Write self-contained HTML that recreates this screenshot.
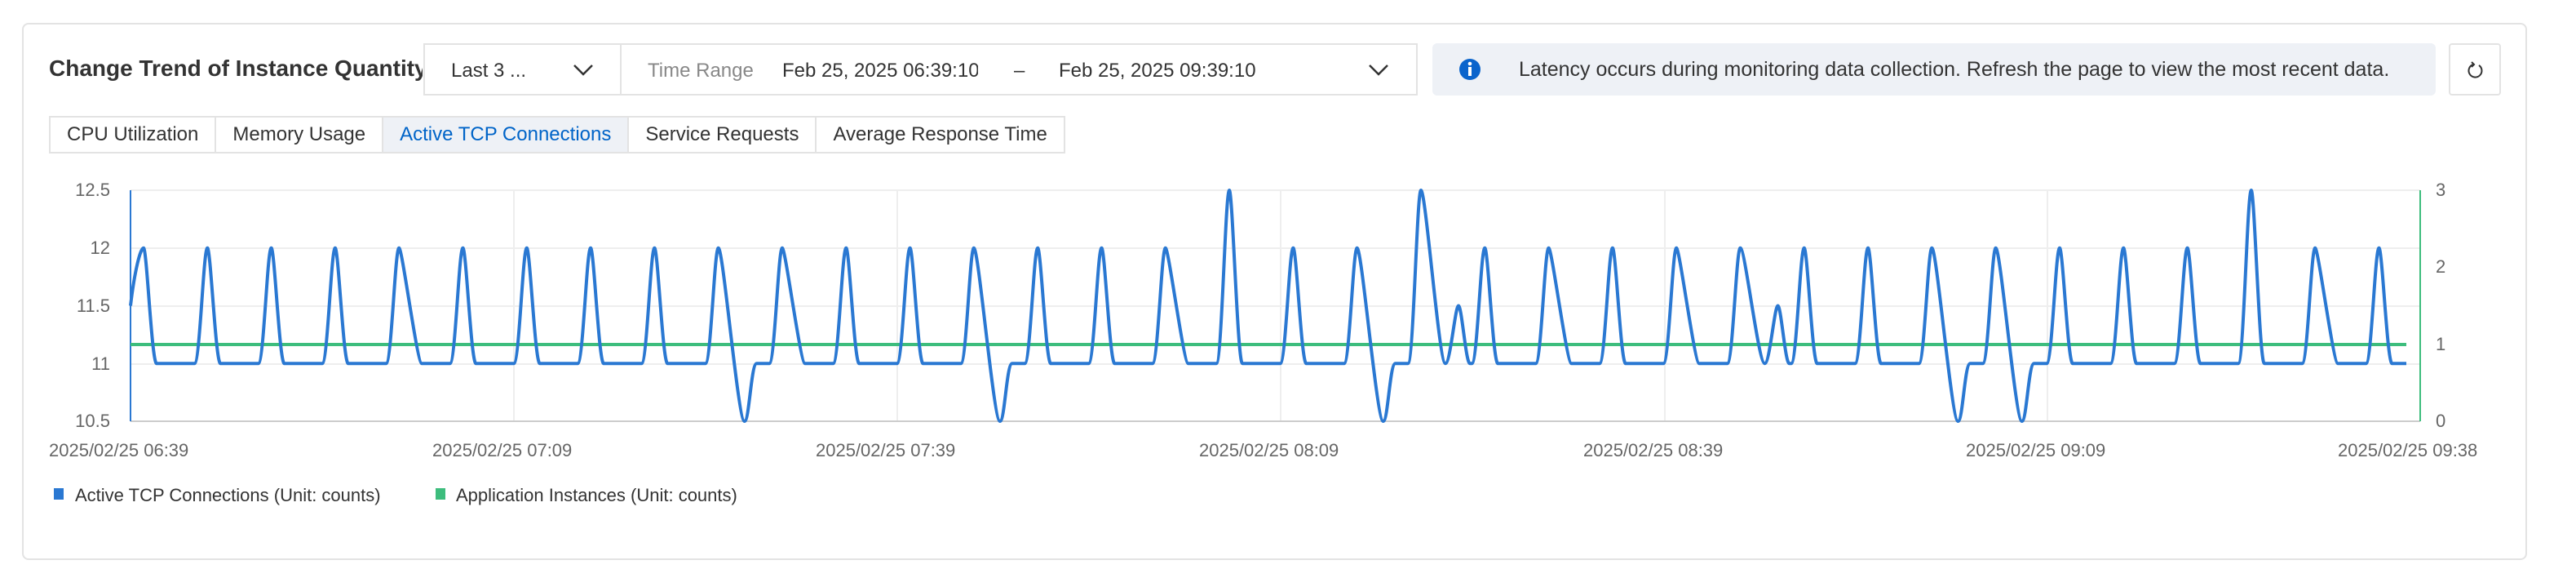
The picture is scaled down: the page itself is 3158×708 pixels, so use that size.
<!DOCTYPE html>
<html><head><meta charset="utf-8"><style>
*{box-sizing:border-box;margin:0;padding:0}
body{width:3158px;height:708px;background:#fff;font-family:"Liberation Sans",sans-serif;position:relative;overflow:hidden;color:#333}
.abs{position:absolute}
.card{left:27px;top:28px;width:3071px;height:658px;border:2px solid #e3e3e3;border-radius:8px}
.title{left:60px;top:68px;font-size:28px;font-weight:bold;color:#333;width:458px;white-space:nowrap;overflow:hidden}
.sel{left:519px;top:53px;width:1219px;height:64px;border:2px solid #e3e3e3;font-size:24px}
.sel span{position:absolute;top:18px;white-space:nowrap}
.info{left:1756px;top:53px;width:1230px;height:64px;background:#eef1f6;border-radius:6px;font-size:25px}
.ref{left:3002px;top:53px;width:64px;height:64px;border:2px solid #e3e3e3;border-radius:4px}
.tabs{left:60px;top:142px;height:46px;display:flex;border:2px solid #e3e3e3;font-size:24px}
.tabs div{height:42px;line-height:42px;padding:0 20px;border-right:2px solid #e3e3e3;color:#333;white-space:nowrap}
.tabs div:last-child{border-right:none}
.tabs .on{background:#eef1f6;color:#0064c8}
.yl{font-size:22px;color:#666;text-align:right;width:80px;left:55px}
.yr{font-size:22px;color:#666;left:2986px}
.xl{font-size:22px;color:#666;top:539px;white-space:nowrap}
.lg{font-size:22px;color:#333;top:594px;white-space:nowrap}
</style></head><body>
<div class="abs card"></div>
<div class="abs title">Change Trend of Instance Quantity</div>
<div class="abs sel">
 <span style="left:32px;color:#333">Last 3 ...</span>
 <svg class="abs" style="left:180px;top:22px" width="28" height="18" viewBox="0 0 28 18"><path d="M3 3 L14 14 L25 3" fill="none" stroke="#333" stroke-width="2.5"/></svg>
 <div class="abs" style="left:239px;top:0;width:2px;height:60px;background:#e3e3e3"></div>
 <span style="left:273px;color:#888">Time Range</span>
 <span style="left:438px;width:240px;overflow:hidden;color:#333">Feb 25, 2025 06:39:10</span>
 <span style="left:722px;color:#333">–</span>
 <span style="left:777px;color:#333">Feb 25, 2025 09:39:10</span>
 <svg class="abs" style="left:1155px;top:22px" width="28" height="18" viewBox="0 0 28 18"><path d="M3 3 L14 14 L25 3" fill="none" stroke="#333" stroke-width="2.5"/></svg>
</div>
<div class="abs info">
 <svg class="abs" style="left:32px;top:18px" width="28" height="28" viewBox="0 0 28 28"><circle cx="14" cy="14" r="13" fill="#0a64cc"/><rect x="12" y="11" width="4" height="11" fill="#fff"/><circle cx="14" cy="7" r="2.3" fill="#fff"/></svg>
 <span class="abs" style="left:106px;top:18px;color:#333;white-space:nowrap">Latency occurs during monitoring data collection. Refresh the page to view the most recent data.</span>
</div>
<div class="abs ref"><svg class="abs" style="left:20px;top:20px" width="22" height="22" viewBox="0 0 22 22"><path d="M8 4 A8 8 0 1 0 15 5" fill="none" stroke="#333" stroke-width="2"/><path d="M6 1 L9 4 L6 7" fill="none" stroke="#333" stroke-width="2"/></svg></div>
<div class="abs tabs"><div>CPU Utilization</div><div>Memory Usage</div><div class="on">Active TCP Connections</div><div>Service Requests</div><div>Average Response Time</div></div>

<div class="abs yl" style="top:220px">12.5</div>
<div class="abs yl" style="top:291px">12</div>
<div class="abs yl" style="top:362px">11.5</div>
<div class="abs yl" style="top:433px">11</div>
<div class="abs yl" style="top:503px">10.5</div>
<div class="abs yr" style="top:220px">3</div>
<div class="abs yr" style="top:314px">2</div>
<div class="abs yr" style="top:409px">1</div>
<div class="abs yr" style="top:503px">0</div>

<svg class="abs" style="left:0;top:0" width="3158" height="708" id="ch">
 <g stroke="#eeeeee" stroke-width="2">
  <line x1="160" y1="233" x2="2967" y2="233"/><line x1="160" y1="304" x2="2967" y2="304"/><line x1="160" y1="375" x2="2967" y2="375"/><line x1="160" y1="446" x2="2967" y2="446"/>
  <line x1="630" y1="233" x2="630" y2="516"/><line x1="1100" y1="233" x2="1100" y2="516"/><line x1="1570" y1="233" x2="1570" y2="516"/><line x1="2041" y1="233" x2="2041" y2="516"/><line x1="2510" y1="233" x2="2510" y2="516"/>
 </g>
 <line x1="160" y1="516" x2="2967" y2="516" stroke="#ccc" stroke-width="2"/>
 <line x1="160" y1="233" x2="160" y2="516" stroke="#2a78d2" stroke-width="2"/>
 <line x1="2967" y1="233" x2="2967" y2="516" stroke="#3dbd7d" stroke-width="2"/>
 <line x1="160" y1="422" x2="2950" y2="422" stroke="#3dbd7d" stroke-width="4"/>
 <path id="bl" fill="none" stroke="#2a78d2" stroke-width="4" stroke-linejoin="round"/>
</svg>
<script>
(function(){
 function Y(v){return 516-(v-10.5)*141.5}
 var big={17:1,20:1,33:1}, sh={4:1,10:1,16:1,22:1,24:1,34:1}, dip={9:1,13:1,19:1,28:1,29:1}, bump={20:1,25:1};
 var d="M160 "+Y(11.5);
 var p0=176;
 for(var i=0;i<36;i++){
  var p=p0+78.3*i, pv=big[i]?12.5:12;
  if(i==0){d+=" C165 "+Y(11.8)+" "+(p-4)+" "+Y(pv)+" "+p+" "+Y(pv);}
  else{d+=" L"+(p-16)+" "+Y(11)+" C"+(p-9)+" "+Y(11)+" "+(p-5)+" "+Y(pv)+" "+p+" "+Y(pv);}
  var e=sh[i]?28:16;
  if(dip[i]){
   d+=" C"+(p+6)+" "+Y(pv)+" "+(p+24)+" "+Y(10.5)+" "+(p+32)+" "+Y(10.5)+" C"+(p+38)+" "+Y(10.5)+" "+(p+40)+" "+Y(11)+" "+(p+47)+" "+Y(11);
  } else if(bump[i]){
   d+=" C"+(p+6)+" "+Y(pv)+" "+(p+22)+" "+Y(11)+" "+(p+30)+" "+Y(11)+" C"+(p+36)+" "+Y(11)+" "+(p+42)+" "+Y(11.5)+" "+(p+46)+" "+Y(11.5)+" C"+(p+50)+" "+Y(11.5)+" "+(p+55)+" "+Y(11)+" "+(p+60)+" "+Y(11);
  } else {
   d+=" C"+(p+4)+" "+Y(pv)+" "+(p+e-6)+" "+Y(11)+" "+(p+e)+" "+Y(11);
  }
 }
 d+=" L2950 "+Y(11);
 document.getElementById("bl").setAttribute("d",d);
})();
</script>

<div class="abs xl" style="left:60px">2025/02/25 06:39</div>
<div class="abs xl" style="left:530px">2025/02/25 07:09</div>
<div class="abs xl" style="left:1000px">2025/02/25 07:39</div>
<div class="abs xl" style="left:1470px">2025/02/25 08:09</div>
<div class="abs xl" style="left:1941px">2025/02/25 08:39</div>
<div class="abs xl" style="left:2410px">2025/02/25 09:09</div>
<div class="abs xl" style="left:2866px">2025/02/25 09:38</div>

<div class="abs" style="left:66px;top:598px;width:12px;height:14px;background:#2a78d2"></div>
<div class="abs lg" style="left:92px">Active TCP Connections (Unit: counts)</div>
<div class="abs" style="left:534px;top:598px;width:12px;height:14px;background:#3dbd7d"></div>
<div class="abs lg" style="left:559px">Application Instances (Unit: counts)</div>
</body></html>
